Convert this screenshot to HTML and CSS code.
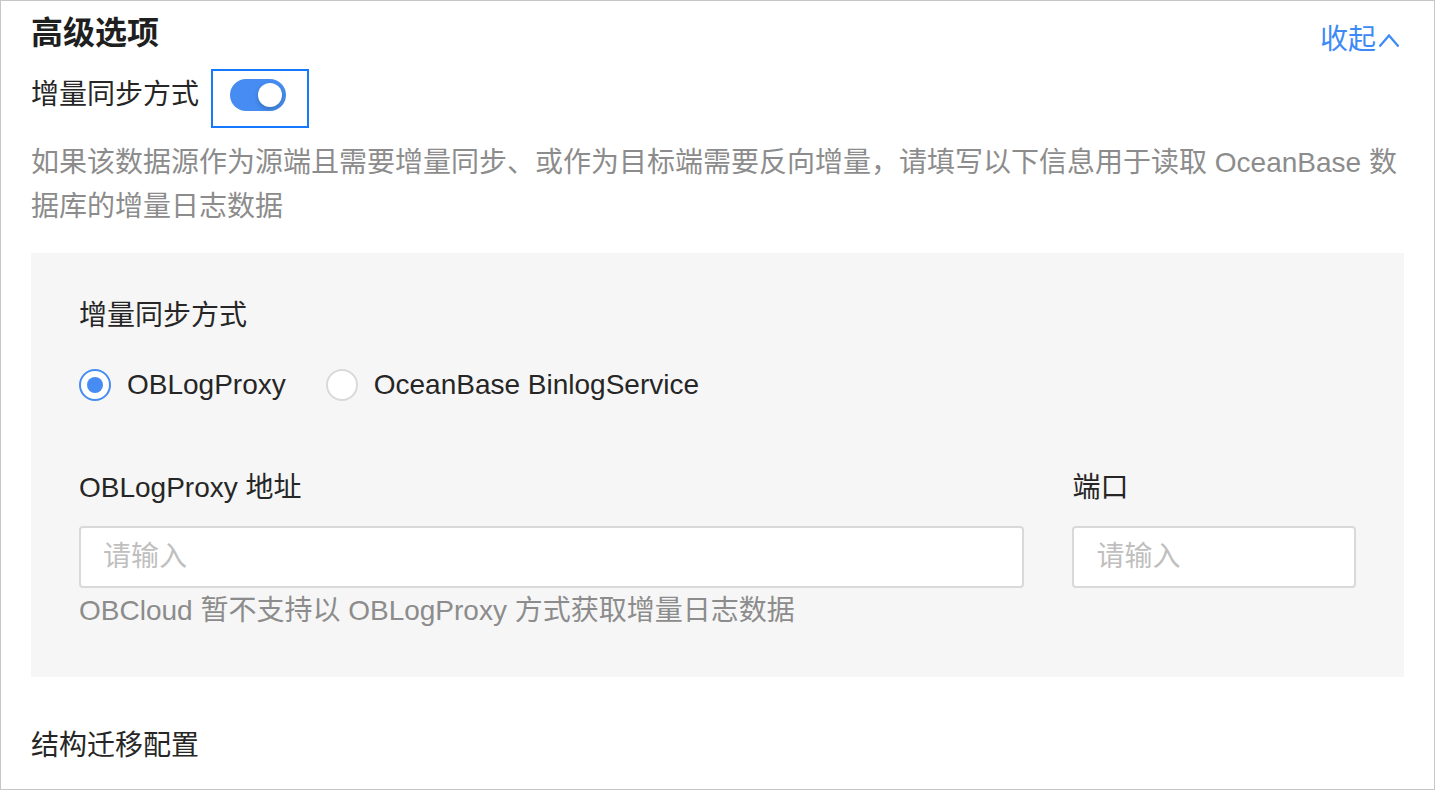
FILE: index.html
```html
<!DOCTYPE html>
<html lang="zh-CN">
<head>
    <meta charset="UTF-8">
    <meta name="viewport" content="width=device-width, initial-scale=1.0">
    <title>高级选项</title>
    <link rel="stylesheet" href="styles.css">
</head>
<body>
    <div class="frame">
        <div class="header">
            <h2 class="title">高级选项</h2>
            <a class="collapse" href="#">收起<svg width="22" height="15" viewBox="0 0 22 15"><path d="M1.5 13.5 L11 2.5 L20.5 13.5" fill="none" stroke="currentColor" stroke-width="2.2"/></svg></a>
        </div>

        <div class="switch-row">
            <span class="row-label">增量同步方式</span>
            <span class="focus-box">
                <span class="switch"><span class="knob"></span></span>
            </span>
        </div>

        <p class="desc">如果该数据源作为源端且需要增量同步、或作为目标端需要反向增量，请填写以下信息用于读取 OceanBase 数据库的增量日志数据</p>

        <div class="panel">
            <div class="field-label">增量同步方式</div>
            <div class="radios">
                <label class="radio checked"><span class="radio-dot"></span>OBLogProxy</label>
                <label class="radio"><span class="radio-dot"></span>OceanBase BinlogService</label>
            </div>

            <div class="fields">
                <div class="field">
                    <div class="field-label">OBLogProxy 地址</div>
                    <input class="input" type="text" placeholder="请输入">
                    <div class="help">OBCloud 暂不支持以 OBLogProxy 方式获取增量日志数据</div>
                </div>
                <div class="field">
                    <div class="field-label">端口</div>
                    <input class="input" type="text" placeholder="请输入">
                </div>
            </div>
        </div>

        <div class="section">结构迁移配置</div>
    </div>
</body>
</html>
```

FILE: styles.css
```css
body {
    margin: 0;
    background: #fff;
    font-family: "Liberation Sans", "Noto Sans CJK SC", sans-serif;
    font-size: 28px;
    line-height: 44px;
    color: #262626;
}

.frame {
    box-sizing: border-box;
    width: 1435px;
    height: 790px;
    padding: 10px 30px 0;
    border: 1px solid #c6c6c6;
    overflow: hidden;
}

.header {
    display: flex;
    justify-content: space-between;
    align-items: flex-start;
    height: 44px;
}

.title {
    margin: 0;
    font-size: 32px;
    line-height: 44px;
    font-weight: 600;
    color: #1f1f1f;
}

.collapse {
    display: inline-flex;
    align-items: center;
    gap: 2px;
    margin-top: 7px;
    padding-right: 4px;
    color: #3d8af7;
    text-decoration: none;
    font-size: 28px;
    line-height: 44px;
}

.switch-row {
    display: flex;
    align-items: flex-start;
    margin-top: 14px;
}

.row-label {
    margin-top: 4px;
    margin-right: 12px;
}

.focus-box {
    box-sizing: border-box;
    display: flex;
    align-items: flex-start;
    width: 98px;
    height: 59px;
    padding: 8px 0 0 17px;
    border: 2px solid #1677ff;
}

.switch {
    box-sizing: border-box;
    display: flex;
    justify-content: flex-end;
    align-items: center;
    width: 56px;
    height: 32px;
    padding: 0 4px;
    border-radius: 16px;
    background: #468cf2;
}

.knob {
    width: 24px;
    height: 24px;
    border-radius: 50%;
    background: #fff;
    box-shadow: 0 2px 4px rgba(0, 35, 11, 0.25);
}

.desc {
    margin: 13px 0 0;
    color: #8c8c8c;
}

.panel {
    margin-top: 24px;
    padding: 41px 48px 44px;
    background: #f6f6f6;
}

.radios {
    display: flex;
    align-items: center;
    margin-top: 25px;
}

.radio {
    display: flex;
    align-items: center;
    margin-right: 40px;
    color: #262626;
}

.radio-dot {
    box-sizing: border-box;
    display: flex;
    justify-content: center;
    align-items: center;
    width: 32px;
    height: 32px;
    margin-right: 16px;
    border: 2px solid #d9d9d9;
    border-radius: 50%;
    background: #fff;
}

.radio.checked .radio-dot {
    border-color: #468cf2;
}

.radio.checked .radio-dot::after {
    content: "";
    width: 16px;
    height: 16px;
    border-radius: 50%;
    background: #468cf2;
}

.fields {
    display: grid;
    grid-template-columns: 10fr 3fr;
    gap: 48px;
    margin-top: 59px;
}

.input {
    box-sizing: border-box;
    display: block;
    width: 100%;
    height: 62px;
    margin-top: 16px;
    padding: 0 22px;
    border: 2px solid #d9d9d9;
    border-radius: 4px;
    background: #fff;
    font-family: inherit;
    font-size: 28px;
    color: #262626;
    outline: none;
}

.input::placeholder {
    color: #bfbfbf;
}

.help {
    margin-top: 1px;
    color: #8c8c8c;
}

.section {
    margin-top: 47px;
}
```
